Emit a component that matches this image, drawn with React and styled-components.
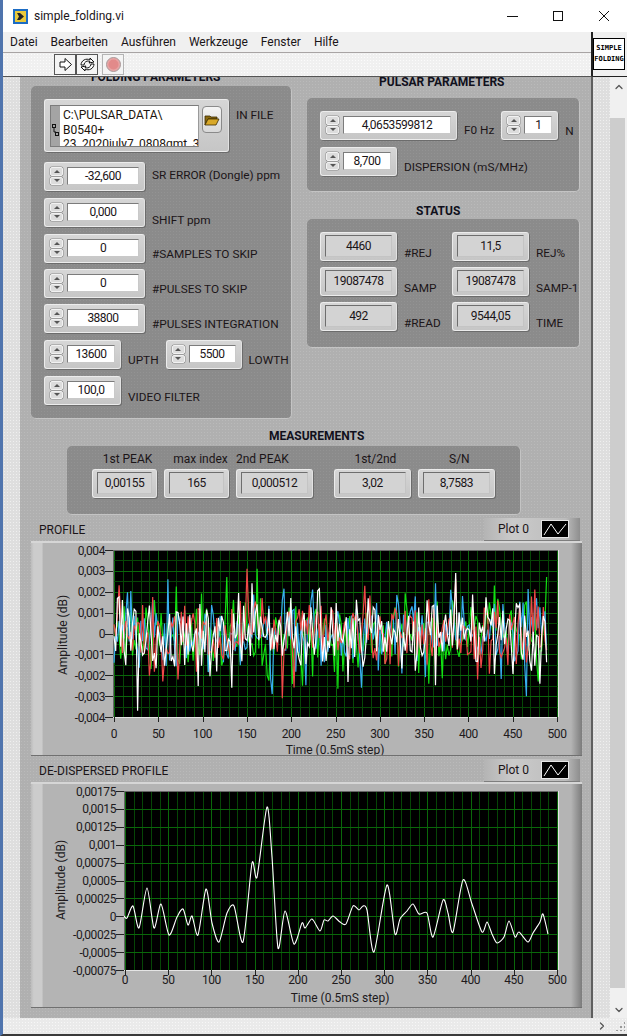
import React from 'react';
import styled, { createGlobalStyle, css } from 'styled-components';
import { ChevronUp, ChevronDown, ChevronRight } from 'lucide-react';

const Global = createGlobalStyle`
html, body { margin: 0; padding: 0; background: #fff; }
* { box-sizing: border-box; }
`;

const font = `Roboto, "Noto Sans", sans-serif`;

const dither = (alpha) => css`
background-image: radial-gradient(circle, rgba(255,255,255,${alpha}) 0.8px, transparent 1px);
background-size: 3px 3px;
`;

const Window = styled.div`
width: 627px;
height: 1036px;
display: flex;
flex-direction: column;
overflow: hidden;
border-left: 3px solid #4f74ad;
border-bottom: 2px solid #3a3a3a;
font-family: ${font};
font-size: 12px;
color: #1b1518;
`;

const TitleBar = styled.div`
height: 32px;
flex: none;
background: #fff;
display: flex;
align-items: center;
padding: 0 0 0 10px;
`;
const TitleText = styled.span`
margin-left: 6px;
flex: 1;
`;
const WinButton = styled.div`
width: 46px;
height: 32px;
display: flex;
align-items: center;
justify-content: center;
`;

const Chrome = styled.div`
height: 45px;
flex: none;
display: flex;
`;
const Bars = styled.div`
flex: 1;
display: flex;
flex-direction: column;
background-color: #f0f0f0;
border-right: 2px solid #222;
border-bottom: 1px solid #555;
`;
const MenuBar = styled.div`
height: 21px;
display: flex;
align-items: center;
padding-left: 7px;
gap: 13px;
border-bottom: 1px solid #a8a4a4;
`;
const ToolBar = styled.div`
flex: 1;
display: flex;
align-items: center;
padding-left: 51px;
${dither(0.7)}
`;
const ToolButton = styled.div`
width: 22px;
height: 21px;
display: flex;
align-items: center;
justify-content: center;
border: 1px solid ${p => (p.$off ? '#b4b4b4' : '#555')};
margin-left: ${p => p.$mt || 0}px;
background: #f4f4f4;
& + & { border-left-width: ${p => (p.$off ? 1 : 0)}px; }
`;
const LogoCell = styled.div`
width: 34px;
flex: none;
background: #f0f0f0;
border-bottom: 1px solid #222;
padding: 6px 0 0 0;
`;
const Logo = styled.div`
width: 32px;
height: 32px;
background: #fff;
border: 1px solid #000;
display: flex;
flex-direction: column;
align-items: center;
justify-content: center;
font-family: "DejaVu Sans Mono", monospace;
font-weight: bold;
font-size: 7px;
line-height: 11px;
color: #000;
`;

const Body = styled.div`
flex: 1;
display: flex;
min-height: 0;
`;
const Gutter = styled.div`
width: 17px;
flex: none;
background-color: #dedede;
${dither(0.5)}
`;
const Panel = styled.div`
width: 573px;
flex: none;
overflow: hidden;
background-color: #b0b0b0;
border-right: 2px solid #5e5e5e;
${dither(0.12)}
`;
const Scroll = styled.div`
width: 17px;
flex: none;
display: flex;
flex-direction: column;
background: #f0f0f0;
`;
const ScrollEnd = styled.div`
height: ${p => p.$h}px;
flex: none;
display: flex;
justify-content: center;
align-items: ${p => (p.$down ? 'flex-end' : 'flex-start')};
padding: ${p => (p.$down ? '0 0 2px 0' : '4px 0 0 0')};
color: #555;
`;
const Thumb = styled.div`
flex: 1;
margin-right: 2px;
background: #cdcdcd;
`;
const BottomBar = styled.div`
height: 16px;
flex: none;
background-color: #eaeaea;
${dither(0.6)}
display: flex;
align-items: center;
justify-content: flex-end;
gap: 7px;
padding-right: 2px;
color: #555;
`;

const Columns = styled.div`
display: grid;
grid-template-columns: 261px 273px;
column-gap: 15px;
padding-left: 11px;
`;
const Column = styled.div`
margin-top: ${p => p.$top}px;
`;
const Heading = styled.div`
font-weight: bold;
line-height: 16px;
color: #10101c;
white-space: nowrap;
padding-left: ${p => p.$indent}px;
margin-top: ${p => p.$mt || 0}px;
`;
const Group = styled.div`
background-color: #8b8b8b;
${dither(0.07)}
border-radius: 5px;
border-right: 1px solid #c4c4c4;
border-bottom: 1px solid #c4c4c4;
height: ${p => p.$h}px;
padding: 13px 0 0 13px;
margin-top: ${p => p.$mt || 0}px;
`;
const Row = styled.div`
display: flex;
align-items: flex-end;
gap: 7px;
margin-top: ${p => p.$mt || 0}px;
`;
const Label = styled.span`
font-size: 11.8px;
line-height: 16px;
white-space: nowrap;
margin-bottom: ${p => p.$lift ?? 1}px;
`;

const Housing = styled.div`
width: ${p => p.$w}px;
height: ${p => p.$h || 29}px;
flex: none;
display: flex;
gap: 4px;
padding: 4px 5px 0 5px;
border-radius: 3px;
background: linear-gradient(#d6d6d6, #c6c6c6);
border: 1px solid #ececec;
border-right-color: #e2e2e2;
box-shadow: 1px 1px 0 #6c6c6c;
`;
const Spinner = styled.div`
width: 13px;
height: 18px;
flex: none;
display: flex;
flex-direction: column;
gap: 1px;
`;
const SpinButton = styled.div`
flex: 1;
background: #dcdcdc;
border: 1px solid #f2f2f2;
border-radius: 2px;
box-shadow: 0 0 0 0.5px #8c8c8c;
display: flex;
align-items: center;
justify-content: center;
&::before {
    content: '';
    border-left: 3px solid transparent;
    border-right: 3px solid transparent;
    ${p => (p.$down ? 'border-top: 3px solid #555;' : 'border-bottom: 3px solid #555;')}
}
`;
const Field = styled.div`
flex: 1;
height: 18px;
background: #fff;
border: 1px solid #c9c9c9;
border-top-color: #7c7c7c;
border-left-color: #7c7c7c;
text-align: center;
line-height: 16px;
letter-spacing: -0.5px;
white-space: nowrap;
`;
const Readout = styled.div`
flex: 1;
height: 22px;
margin: -2px -1px 0 -1px;
background-color: #d3d3d3;
border: 1px solid #c4c4c4;
border-top-color: #6e6e6e;
border-left-color: #6e6e6e;
text-align: center;
line-height: 20px;
letter-spacing: -0.5px;
white-space: nowrap;
`;

const PathHousing = styled(Housing)`
padding: 5px 0 0 5px;
gap: 3px;
`;
const PathBox = styled.div`
width: 149px;
height: 42px;
display: flex;
border: 1px solid #7c7c7c;
border-right-color: #9a9a9a;
background: #a4a4a4;
`;
const PathIcon = styled.div`
width: 9px;
display: flex;
align-items: center;
justify-content: center;
padding-top: 8px;
`;
const PathText = styled.div`
flex: 1;
background: #fff;
padding: 2px 0 0 3px;
line-height: 14.5px;
overflow: hidden;
white-space: nowrap;
color: #20140c;
`;
const BrowseButton = styled.div`
width: 20px;
height: 27px;
margin-top: 1px;
background: linear-gradient(#f4f4f4, #d8d8d8);
border: 1px solid #8a8a8a;
border-radius: 4px;
display: flex;
align-items: center;
justify-content: center;
`;

const StatusGrid = styled.div`
display: grid;
grid-template-columns: 132px 1fr;
row-gap: 6px;
`;

const MeasureRow = styled.div`
display: flex;
gap: 7px;
padding: 5px 0 0 25px;
height: 100%;
`;
const MeasureColumn = styled.div`
margin-left: ${p => p.$ml || 0}px;
`;
const MeasureLabel = styled.div`
line-height: 16px;
height: 18px;
text-align: center;
white-space: nowrap;
margin-left: ${p => (p.$shift > 0 ? p.$shift * 2 : 0)}px;
margin-right: ${p => (p.$shift < 0 ? -p.$shift * 2 : 0)}px;
`;
const MeasureGroup = styled(Group)`
width: 454px;
padding: 0;
margin-left: 47px;
`;

const ChartSection = styled.section`
margin: 3px 0 0 11px;
width: 551px;
`;
const ChartHead = styled.div`
height: 23px;
display: flex;
justify-content: space-between;
align-items: center;
padding-left: 8px;
`;
const Legend = styled.div`
width: 96px;
height: 23px;
margin-right: 2px;
display: flex;
align-items: center;
padding-left: 14px;
gap: 12px;
background: linear-gradient(90deg, #b4b4b4, #cacaca 30%, #bcbcbc 85%, #8e8e8e);
border-bottom: 1px solid #7e7e7e;
`;
const Swatch = styled.div`
width: 28px;
height: 18px;
background: #000;
border: 1px solid #e6e6e6;
display: flex;
`;
const Frame = styled.div`
height: ${p => p.$h}px;
background: linear-gradient(90deg, #bcbcbc, #cccccc 0.5%, #cccccc 2%, #b4b4b4 2.2%, #b4b4b4 98%, #7c7c7c);
border-top: 2px solid #d6d6d6;
border-bottom: 1px solid #707070;
`;
const ChartSvg = styled.svg`
display: block;
text {
    font-family: ${font};
    font-size: 12px;
    fill: #201a1c;
}
.tick { letter-spacing: -0.4px; }
`;
const Grip = styled.div`
width: 10px;
height: 10px;
background-image: radial-gradient(circle, #999 1px, transparent 1.2px);
background-size: 4px 4px;
clip-path: polygon(100% 0, 100% 100%, 0 100%);
`;

// seeded noise so the traces stay the same on each load
function rng(seed) {
    return () => {
        seed = (seed + 0x6d2b79f5) | 0;
        let t = Math.imul(seed ^ (seed >>> 15), 1 | seed);
        t = (t + Math.imul(t ^ (t >>> 7), 61 | t)) ^ t;
        return ((t ^ (t >>> 14)) >>> 0) / 4294967296;
    };
}

function noiseTrace(seed, spikes) {
    const r = rng(seed);
    const pts = [];
    for (let x = 0; x <= 490; x += 1.9) {
        const g = (r() + r() + r() + r() - 2) * 1.73;
        let v = g * 0.0009;
        spikes.forEach(([sx, sv]) => {
            if (Math.abs(x - sx) < 1) v = sv;
        });
        pts.push([x, v]);
    }
    return pts;
}

const traces = [
    { color: '#12e012', data: noiseTrace(11, [[128, 0.0027], [161, 0.0031], [355, -0.0024], [430, 0.0023], [488, 0.0027], [173, -0.002]]) },
    { color: '#38aef0', data: noiseTrace(23, [[60, 0.0026], [178, -0.0029], [280, -0.0026], [363, 0.0024], [465, -0.003], [225, 0.0021]]) },
    { color: '#f04848', data: noiseTrace(37, [[5, 0.0023], [72, -0.0022], [150, 0.0031], [190, -0.0031], [385, 0.0026], [410, -0.0022]]) },
    { color: '#ffffff', data: noiseTrace(53, [[27, -0.0037], [133, -0.0026], [155, 0.0024], [385, 0.0029], [480, -0.0024]]) },
];

// traced from the curve, in page pixels
const dedispersed = [
    [124, 916], [127, 918], [133, 906], [139, 928], [147, 888], [154, 928], [161, 904], [169, 935],
    [177, 917], [183, 909], [188, 925], [192, 916], [198, 935], [206, 889], [212, 923], [219, 942],
    [227, 913], [234, 906], [243, 942], [252, 863], [257, 877], [267, 807], [272, 857], [278, 948],
    [285, 911], [294, 944], [302, 923], [305, 928], [312, 919], [320, 931], [324, 920], [328, 921],
    [333, 916], [340, 922], [346, 924], [353, 906], [359, 910], [363, 906], [367, 910], [374, 952],
    [387, 885], [395, 934], [400, 919], [407, 911], [413, 904], [419, 914], [427, 913], [433, 937],
    [443, 900], [448, 913], [453, 932], [463, 880], [472, 904], [482, 932], [487, 922], [492, 934],
    [497, 943], [504, 937], [509, 921], [515, 937], [519, 932], [528, 942], [533, 933], [540, 922],
    [543, 914], [548, 934],
];

function smoothPath(pts) {
    let d = `M${pts[0][0]} ${pts[0][1]}`;
    for (let i = 0; i < pts.length - 1; i++) {
        const p0 = pts[i - 1] || pts[i];
        const p1 = pts[i];
        const p2 = pts[i + 1];
        const p3 = pts[i + 2] || p2;
        const c1x = p1[0] + (p2[0] - p0[0]) / 8;
        const c1y = p1[1] + (p2[1] - p0[1]) / 8;
        const c2x = p2[0] - (p3[0] - p1[0]) / 8;
        const c2y = p2[1] - (p3[1] - p1[1]) / 8;
        d += `C${c1x.toFixed(1)} ${c1y.toFixed(1)} ${c2x.toFixed(1)} ${c2y.toFixed(1)} ${p2[0]} ${p2[1]}`;
    }
    return d;
}

function Chart({ h, l, t, r, b, yLabels, minorY, labelX, titleX, titleY, xTitleY, xLabelY, children }) {
    const xPos = v => l + 1 + (v / 500) * (r - l - 2);
    const yStep = (b - t) / (yLabels.length - 1);
    const xs = [];
    for (let v = 0; v <= 500; v += 10) xs.push(v);
    const hLines = [];
    yLabels.forEach((_, i) => {
        const y = Math.round(t + i * yStep);
        hLines.push({ y, major: true });
        if (minorY && i < yLabels.length - 1) hLines.push({ y: Math.round(t + (i + 0.5) * yStep), major: false });
    });
    return (
        <ChartSvg width="551" height={h} viewBox={`0 0 551 ${h}`}>
            <rect x={l} y={t} width={r - l} height={b - t} fill="#000" />
            <g shapeRendering="crispEdges">
                {xs.map(v => (
                    <line key={v} x1={Math.round(xPos(v))} x2={Math.round(xPos(v))} y1={t} y2={b}
                        stroke={v % 50 === 0 ? '#0a680a' : '#064606'} />
                ))}
                {hLines.map(g => (
                    <line key={g.y} x1={l} x2={r} y1={g.y} y2={g.y} stroke={g.major ? '#0a680a' : '#064606'} />
                ))}
                <line x1={l} x2={r} y1={t} y2={t} stroke="#666" />
                <line x1={l} x2={l} y1={t} y2={b} stroke="#666" />
                <line x1={l} x2={r} y1={b} y2={b} stroke="#e4e4e4" />
                <line x1={r} x2={r} y1={t} y2={b} stroke="#e4e4e4" />
                {yLabels.map((_, i) => (
                    <line key={i} x1={l - 8} x2={l} y1={Math.round(t + i * yStep)} y2={Math.round(t + i * yStep)} stroke="#222" />
                ))}
                {xs.filter(v => v % 50 === 0).map(v => (
                    <line key={v} x1={Math.round(xPos(v))} x2={Math.round(xPos(v))} y1={b} y2={b + 5} stroke="#222" />
                ))}
            </g>
            {children({ xPos })}
            {yLabels.map((s, i) => (
                <text key={s} className="tick" x={labelX} y={t + i * yStep + 4.5} textAnchor="end">{s}</text>
            ))}
            {xs.filter(v => v % 50 === 0).map(v => (
                <text key={v} className="tick" x={xPos(v)} y={xLabelY} textAnchor="middle">{v}</text>
            ))}
            <text x={titleX} y={xTitleY} textAnchor="middle">Time (0.5mS step)</text>
            <text transform={`translate(${titleY[0]} ${titleY[1]}) rotate(-90)`} textAnchor="middle">Amplitude (dB)</text>
        </ChartSvg>
    );
}

function PlotLegend() {
    return (
        <Legend>
            <span>Plot 0</span>
            <Swatch>
                <svg width="26" height="16" viewBox="0 0 26 16">
                    <polyline points="2,14 9,3 16,13 24,3" fill="none" stroke="#fff" />
                </svg>
            </Swatch>
        </Legend>
    );
}

function Numeric({ w, value }) {
    return (
        <Housing $w={w}>
            <Spinner>
                <SpinButton />
                <SpinButton $down />
            </Spinner>
            <Field>{value}</Field>
        </Housing>
    );
}

function Indicator({ w = 77, value }) {
    return (
        <Housing $w={w}>
            <Readout>{value}</Readout>
        </Housing>
    );
}

function Status({ value, label }) {
    return (
        <Row>
            <Indicator value={value} />
            <Label $lift={0}>{label}</Label>
        </Row>
    );
}

function Measure({ w, ml, shift, label, value }) {
    return (
        <MeasureColumn $ml={ml}>
            <MeasureLabel $shift={shift}>{label}</MeasureLabel>
            <Indicator w={w} value={value} />
        </MeasureColumn>
    );
}

function WindowIcon({ kind }) {
    return (
        <svg width="11" height="11" viewBox="0 0 11 11" fill="none" stroke="#111" shapeRendering="crispEdges">
            {kind === 'min' && <line x1="0" x2="11" y1="5.5" y2="5.5" />}
            {kind === 'max' && <rect x="0.5" y="0.5" width="9" height="9" />}
            {kind === 'close' && <path d="M0 0L10 10M10 0L0 10" shapeRendering="auto" />}
        </svg>
    );
}

export default function App() {
    return (
        <>
            <Global />
            <Window>
                <TitleBar>
                    <svg width="15" height="15" viewBox="0 0 15 15">
                        <rect width="15" height="15" fill="#1c6cc4" />
                        <rect x="2" y="2" width="11" height="11" fill="#e9c93c" />
                        <path d="M4 4h3l4 3.5L7 11H4l2-3.500z" fill="#222" />
                    </svg>
                    <TitleText>simple_folding.vi</TitleText>
                    <WinButton><WindowIcon kind="min" /></WinButton>
                    <WinButton><WindowIcon kind="max" /></WinButton>
                    <WinButton><WindowIcon kind="close" /></WinButton>
                </TitleBar>
                <Chrome>
                    <Bars>
                        <MenuBar>
                            <span>Datei</span>
                            <span>Bearbeiten</span>
                            <span>Ausführen</span>
                            <span>Werkzeuge</span>
                            <span>Fenster</span>
                            <span>Hilfe</span>
                        </MenuBar>
                        <ToolBar>
                            <ToolButton>
                                <svg width="15" height="15" viewBox="0 0 15 15">
                                    <path d="M2 5h5V1.500L13.500 7.500 7 13.500V10H2z" fill="#fff" stroke="#111" />
                                </svg>
                            </ToolButton>
                            <ToolButton>
                                <svg width="17" height="17" viewBox="0 0 17 17" fill="#fff" stroke="#111">
                                    <path d="M2 9a6 6 0 0 1 9-5V2l4 4-5 1 1-1.500a4 4 0 0 0-6 3.500z" />
                                    <path d="M15 8a6 6 0 0 1-9 5v2l-4-4 5-1-1 1.500a4 4 0 0 0 6-3.500z" />
                                </svg>
                            </ToolButton>
                            <ToolButton $off $mt={4}>
                                <svg width="17" height="17" viewBox="0 0 17 17">
                                    <circle cx="8.500" cy="8.500" r="7" fill="#e8a4a4" stroke="#a89a9a" />
                                    <circle cx="8.500" cy="8.500" r="5" fill="#e28a8a" />
                                </svg>
                            </ToolButton>
                        </ToolBar>
                    </Bars>
                    <LogoCell>
                        <Logo>
                            <span>SIMPLE</span>
                            <span>FOLDING</span>
                        </Logo>
                    </LogoCell>
                </Chrome>
                <Body>
                    <Gutter />
                    <Panel>
                        <Columns>
                            <Column $top={-8}>
                                <Heading $indent={60}>FOLDING PARAMETERS</Heading>
                                <Group $h={333} $mt={1}>
                                    <Row>
                                        <PathHousing $w={185} $h={53}>
                                            <PathBox>
                                                <PathIcon>
                                                    <svg width="7" height="13" viewBox="0 0 7 13" fill="none" stroke="#111">
                                                        <rect x="0.500" y="0.500" width="3" height="3" />
                                                        <path d="M2 4v4h2" />
                                                        <rect x="3.500" y="8.500" width="3" height="3" />
                                                    </svg>
                                                </PathIcon>
                                                <PathText>
                                                    C:\PULSAR_DATA\<br />
                                                    B0540+<br />
                                                    23_2020july7_0808gmt_3
                                                </PathText>
                                            </PathBox>
                                            <BrowseButton>
                                                <svg width="16" height="12" viewBox="0 0 16 12">
                                                    <path d="M1 2h5l1 1h6v2H4L1 11z" fill="#8a6a10" stroke="#3c2c00" strokeWidth="0.800" />
                                                    <path d="M4 5h11l-3 6H1z" fill="#d8a828" stroke="#3c2c00" strokeWidth="0.800" />
                                                </svg>
                                            </BrowseButton>
                                        </PathHousing>
                                        <Label $lift={29}>IN FILE</Label>
                                    </Row>
                                    <Row $mt={10}>
                                        <Numeric w={101} value="-32,600" />
                                        <Label $lift={8}>SR ERROR (Dongle) ppm</Label>
                                    </Row>
                                    <Row $mt={7}>
                                        <Numeric w={101} value="0,000" />
                                        <Label $lift={-1}>SHIFT ppm</Label>
                                    </Row>
                                    <Row $mt={7}>
                                        <Numeric w={101} value="0" />
                                        <Label>#SAMPLES TO SKIP</Label>
                                    </Row>
                                    <Row $mt={6}>
                                        <Numeric w={101} value="0" />
                                        <Label>#PULSES TO SKIP</Label>
                                    </Row>
                                    <Row $mt={6}>
                                        <Numeric w={101} value="38800" />
                                        <Label>#PULSES INTEGRATION</Label>
                                    </Row>
                                    <Row $mt={7}>
                                        <Numeric w={77} value="13600" />
                                        <Label>UPTH</Label>
                                        <Numeric w={76} value="5500" />
                                        <Label>LOWTH</Label>
                                    </Row>
                                    <Row $mt={7}>
                                        <Numeric w={77} value="100,0" />
                                        <Label $lift={0}>VIDEO FILTER</Label>
                                    </Row>
                                </Group>
                            </Column>
                            <Column $top={-3}>
                                <Heading $indent={72}>PULSAR PARAMETERS</Heading>
                                <Group $h={94} $mt={8}>
                                    <Row>
                                        <Numeric w={137} value="4,0653599812" />
                                        <Label $lift={2}>F0 Hz</Label>
                                        <Numeric w={57} value="1" />
                                        <Label>N</Label>
                                    </Row>
                                    <Row $mt={7}>
                                        <Numeric w={77} value="8,700" />
                                        <Label>DISPERSION (mS/MHz)</Label>
                                    </Row>
                                </Group>
                                <Heading $indent={109} $mt={11}>STATUS</Heading>
                                <Group $h={129}>
                                    <StatusGrid>
                                        <Status value="4460" label="#REJ" />
                                        <Status value="11,5" label="REJ%" />
                                        <Status value="19087478" label="SAMP" />
                                        <Status value="19087478" label="SAMP-1" />
                                        <Status value="492" label="#READ" />
                                        <Status value="9544,05" label="TIME" />
                                    </StatusGrid>
                                </Group>
                            </Column>
                        </Columns>
                        <Heading $indent={249} $mt={9}>MEASUREMENTS</Heading>
                        <MeasureGroup $h={69} $mt={2}>
                            <MeasureRow>
                                <Measure w={65} shift={3} label="1st PEAK" value="0,00155" />
                                <Measure w={65} shift={4} label="max index" value="165" />
                                <Measure w={77} shift={-13} label="2nd PEAK" value="0,000512" />
                                <Measure w={77} ml={12} shift={3} label="1st/2nd" value="3,02" />
                                <Measure w={77} shift={3} label="S/N" value="8,7583" />
                            </MeasureRow>
                        </MeasureGroup>
                        <ChartSection>
                            <ChartHead>
                                <span>PROFILE</span>
                                <PlotLegend />
                            </ChartHead>
                            <Frame $h={215}>
                                <Chart h={212} l={82} t={7} r={527} b={174}
                                    yLabels={['0,004', '0,003', '0,002', '0,001', '0', '-0,001', '-0,002', '-0,003', '-0,004']}
                                    minorY labelX={74} titleX={304} titleY={[36, 92]} xTitleY={211} xLabelY={195}>
                                    {({ xPos }) => traces.map(tr => (
                                        <polyline key={tr.color} fill="none" stroke={tr.color} strokeWidth="1.200"
                                            points={tr.data.map(([x, v]) => `${xPos(x).toFixed(1)},${(90.500 - v * 20900).toFixed(1)}`).join(' ')} />
                                    ))}
                                </Chart>
                            </Frame>
                        </ChartSection>
                        <ChartSection>
                            <ChartHead>
                                <span>DE-DISPERSED PROFILE</span>
                                <PlotLegend />
                            </ChartHead>
                            <Frame $h={226}>
                                <Chart h={223} l={93} t={7} r={527} b={186}
                                    yLabels={['0,00175', '0,0015', '0,00125', '0,001', '0,00075', '0,0005', '0,00025', '0', '-0,00025', '-0,0005', '-0,00075']}
                                    labelX={85} titleX={309} titleY={[34, 96]} xTitleY={218} xLabelY={200}>
                                    {() => (
                                        <path fill="none" stroke="#fff" strokeWidth="1.100"
                                            d={smoothPath(dedispersed.map(([x, y]) => [x - 31, y - 784]))} />
                                    )}
                                </Chart>
                            </Frame>
                        </ChartSection>
                    </Panel>
                    <Gutter />
                    <Scroll>
                        <ScrollEnd $h={41}><ChevronUp size={12} strokeWidth={2.500} /></ScrollEnd>
                        <Thumb />
                        <ScrollEnd $h={30} $down><ChevronDown size={12} strokeWidth={2.500} /></ScrollEnd>
                    </Scroll>
                </Body>
                <BottomBar><ChevronRight size={12} strokeWidth={2.500} /><Grip /></BottomBar>
            </Window>
        </>
    );
}
